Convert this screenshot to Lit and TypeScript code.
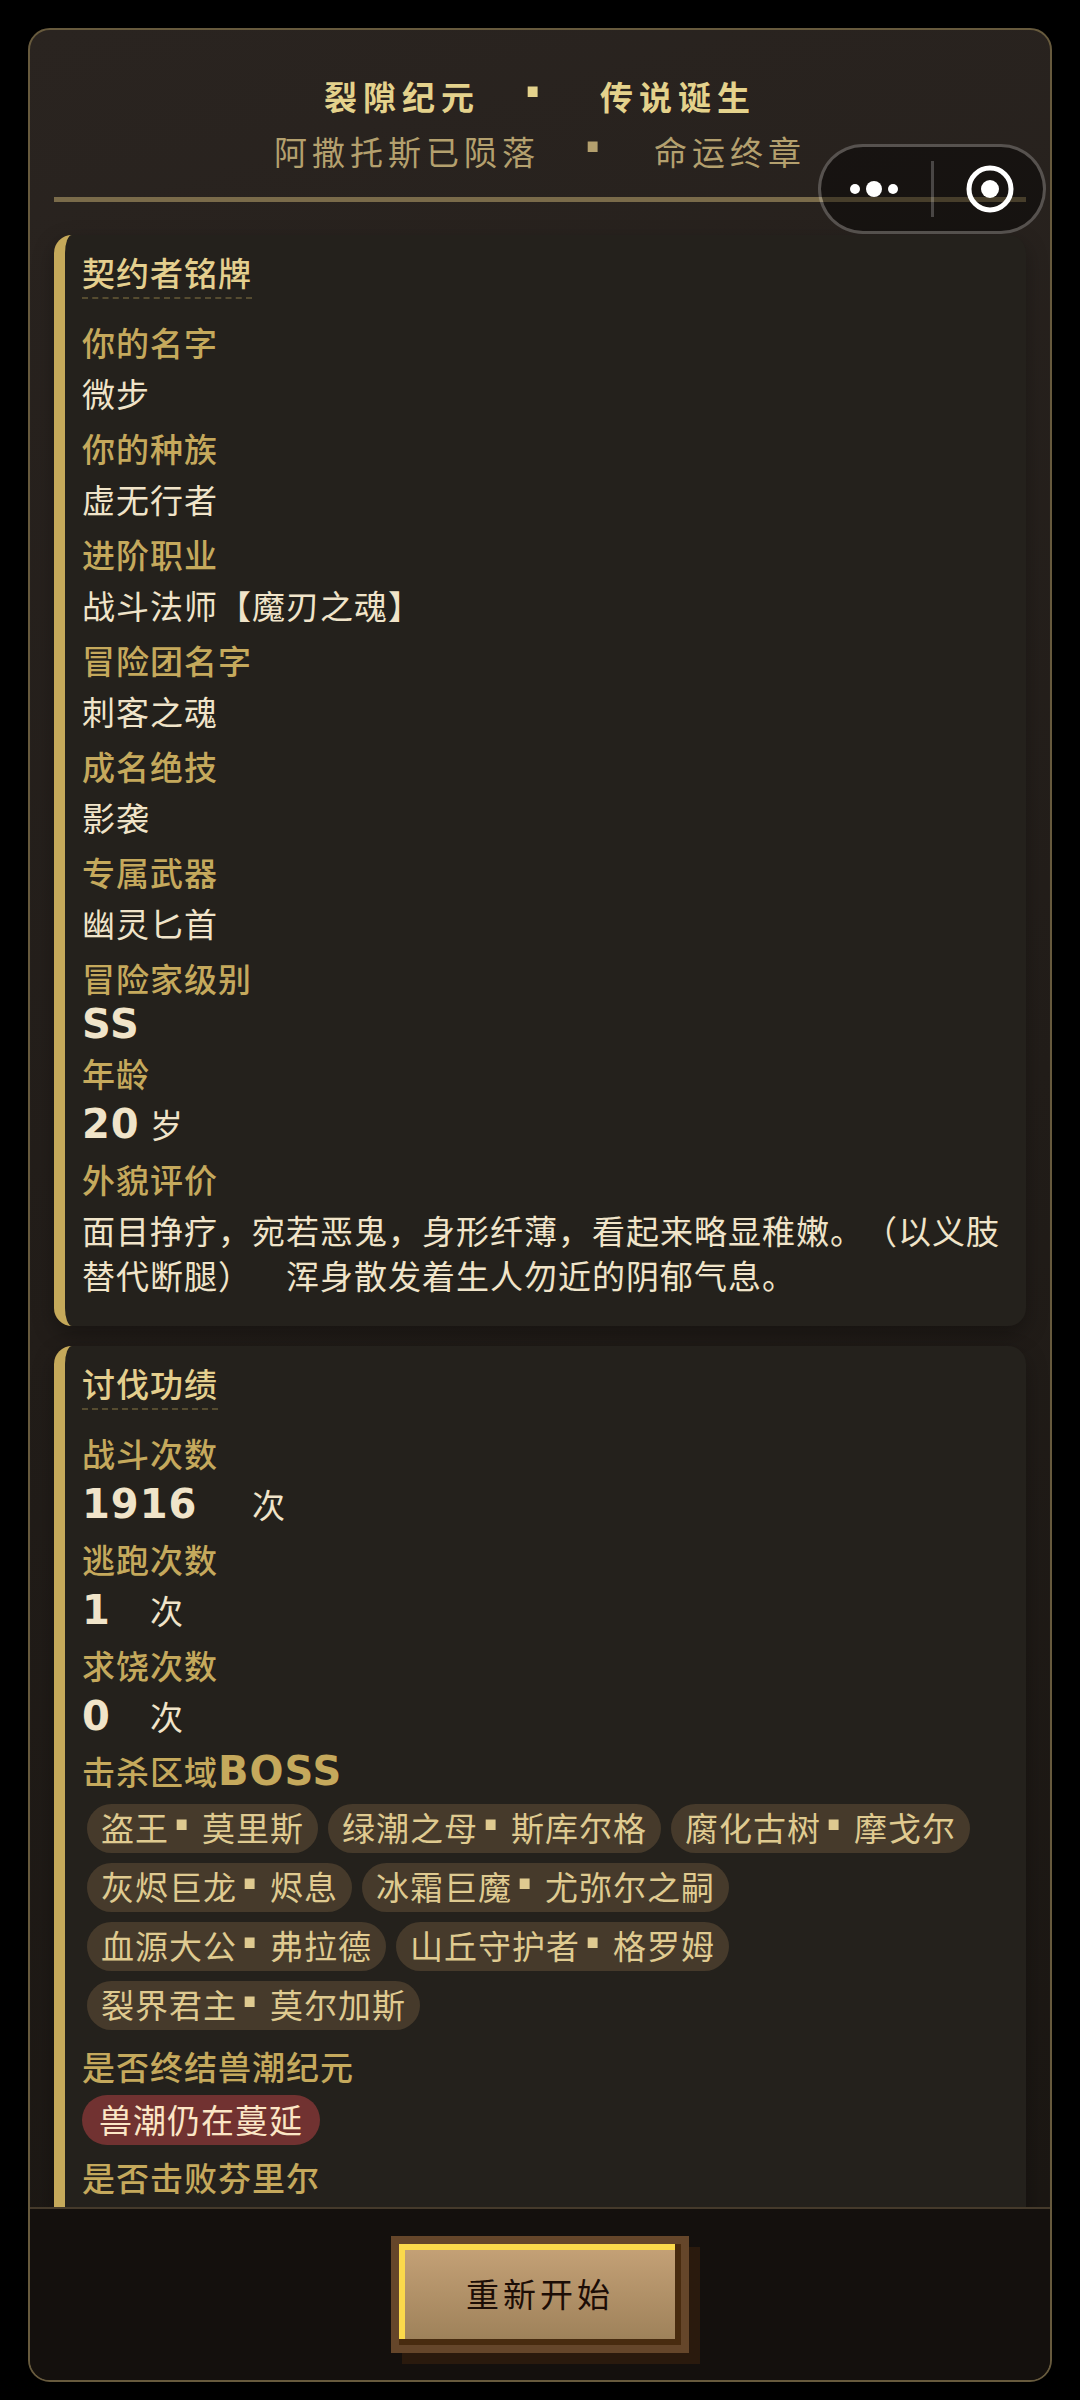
import { LitElement, html, css, nothing, TemplateResult } from "lit";
import { customElement, property } from "lit/decorators.js";

const sans = css`"Noto Sans CJK SC", "Noto Sans", sans-serif`;
const block = css`"DejaVu Sans", "Noto Sans CJK SC", sans-serif`;

interface Entry {
  label: string;
  labelCode?: string;
  text?: string;
  number?: string;
  unit?: string;
  spaced?: boolean;
  tags?: string[][];
  status?: string;
}

const profile: Entry[] = [
  { label: "你的名字", text: "微步" },
  { label: "你的种族", text: "虚无行者" },
  { label: "进阶职业", text: "战斗法师【魔刃之魂】" },
  { label: "冒险团名字", text: "刺客之魂" },
  { label: "成名绝技", text: "影袭" },
  { label: "专属武器", text: "幽灵匕首" },
  { label: "冒险家级别", number: "SS" },
  { label: "年龄", number: "20", unit: "岁" },
  {
    label: "外貌评价",
    text: "面目挣疗，宛若恶鬼，身形纤薄，看起来略显稚嫩。（以义肢替代断腿）\u3000浑身散发着生人勿近的阴郁气息。",
  },
];

const deeds: Entry[] = [
  { label: "战斗次数", number: "1916", unit: "次", spaced: true },
  { label: "逃跑次数", number: "1", unit: "次", spaced: true },
  { label: "求饶次数", number: "0", unit: "次", spaced: true },
  {
    label: "击杀区域",
    labelCode: "BOSS",
    tags: [
      ["盗王", "莫里斯"],
      ["绿潮之母", "斯库尔格"],
      ["腐化古树", "摩戈尔"],
      ["灰烬巨龙", "烬息"],
      ["冰霜巨魔", "尤弥尔之嗣"],
      ["血源大公", "弗拉德"],
      ["山丘守护者", "格罗姆"],
      ["裂界君主", "莫尔加斯"],
    ],
  },
  { label: "是否终结兽潮纪元", status: "兽潮仍在蔓延" },
  { label: "是否击败芬里尔" },
];

@customElement("record-card")
export class RecordCard extends LitElement {
  @property() heading = "";
  @property({ attribute: false }) entries: Entry[] = [];

  static styles = css`
    :host {
      display: block;
      flex: none;
      box-sizing: border-box;
      padding: 15px 17px 18px;
      border-left: 11px solid #c5a95a;
      border-radius: 18px;
      background: #24211c;
      box-shadow: 0 8px 22px rgba(0, 0, 0, 0.3);
      font: 400 33px/45px ${sans};
      letter-spacing: 1px;
      color: #f0e4c9;
    }
    .heading {
      display: inline-block;
      vertical-align: top;
      margin: 0 0 21px;
      padding-bottom: 2px;
      border-bottom: 2px dashed #564c30;
      font-size: 33px;
      font-weight: 500;
      color: #e4cf8e;
    }
    .list {
      margin: 0;
    }
    .entry {
      margin-bottom: 10px;
    }
    .label {
      height: 45px;
      margin-bottom: 6px;
      font-weight: 500;
      color: #c5a95c;
    }
    .value {
      display: flex;
      margin: 0;
      align-items: baseline;
    }
    .prose {
      text-spacing-trim: space-all;
    }
    .number,
    .code {
      font: 700 40px/34px ${block};
    }
    .gap {
      margin-left: 34px;
    }
    .mixed {
      height: 45px;
    }
    .tags {
      display: flex;
      flex-wrap: wrap;
      gap: 10px;
      margin: 0;
      padding: 4px 5px;
      list-style: none;
    }
    .tag {
      display: flex;
      height: 49px;
      padding: 0 14px;
      border-radius: 25px;
      background: #463a2b;
      line-height: 47px;
      color: #dfca90;
    }
    .dot {
      box-sizing: border-box;
      width: 33px;
      padding-left: 2px;
      font: 700 56px/41px ${block};
    }
    .status {
      height: 50px;
      padding: 0 17px;
      border-radius: 25px;
      background: #713231;
      line-height: 48px;
      color: #fbe6c6;
    }
  `;

  private value(e: Entry): TemplateResult | typeof nothing {
    if (e.text) return html`<dd class="value prose">${e.text}</dd>`;
    if (e.number)
      return html`<dd class="value ${e.unit ? "mixed" : ""}">
        <span class="number" style="min-width:${e.number.length * 34}px">${e.number}</span
        >${e.unit ? html`<span class=${e.spaced ? "gap" : ""}>${e.unit}</span>` : nothing}
      </dd>`;
    if (e.tags)
      return html`<dd class="value">
        <ul class="tags">
          ${e.tags.map(
            ([a, b]) => html`<li class="tag"><span>${a}</span><span class="dot">·</span><span>${b}</span></li>`
          )}
        </ul>
      </dd>`;
    if (e.status) return html`<dd class="value"><span class="status">${e.status}</span></dd>`;
    return nothing;
  }

  render() {
    return html`
      <h2 class="heading">${this.heading}</h2>
      <dl class="list">
        ${this.entries.map(
          (e) => html`<div class="entry">
            <dt class="label">${e.label}${e.labelCode ? html`<span class="code">${e.labelCode}</span>` : nothing}</dt>
            ${this.value(e)}
          </div>`
        )}
      </dl>
    `;
  }
}

@customElement("app-root")
export class AppRoot extends LitElement {
  static styles = css`
    :host {
      display: flex;
      flex-direction: column;
      box-sizing: border-box;
      position: relative;
      height: 100vh;
      padding: 28px 28px 18px;
      background: #000;
      font-family: ${sans};
    }
    .panel {
      display: flex;
      flex: 1;
      flex-direction: column;
      min-height: 0;
      overflow: hidden;
      border: 2px solid #675a3d;
      border-radius: 22px;
      background: linear-gradient(165deg, #2a2420, #1a1612);
    }
    .scroll {
      display: flex;
      flex: 1;
      flex-direction: column;
      gap: 20px;
      min-height: 0;
      padding: 24px 24px 0;
      overflow-y: auto;
      scrollbar-width: none;
    }
    .header {
      flex: none;
      margin-bottom: 13px;
      padding: 15px 0 18px;
      border-bottom: 5px solid #7a6b4a;
    }
    .title,
    .subtitle {
      display: flex;
      justify-content: center;
      margin: 0;
      font-size: 33px;
      line-height: 55px;
      white-space: nowrap;
    }
    .title {
      font-weight: 700;
      letter-spacing: 6px;
      color: #e4d28c;
    }
    .subtitle {
      font-weight: 400;
      letter-spacing: 5px;
      color: #b4a06e;
    }
    .dot {
      box-sizing: border-box;
      width: 114px;
      padding-left: 42px;
      font: 700 56px/45px ${block};
    }
    .title .dot {
      width: 120px;
    }
    .footer {
      display: flex;
      flex: none;
      justify-content: center;
      padding: 27px 24px;
      border-top: 2px solid #453a2b;
      background: #14100d;
    }
    .restart {
      min-width: 298px;
      height: 117px;
      padding: 0 60px 3px;
      border: 8px solid #65462a;
      border-radius: 0;
      background: linear-gradient(#c9a57a, #997d56);
      background-origin: border-box;
      box-shadow:
        inset -6px -6px 0 #482b0f,
        inset 6px 6px 0 #fbd94b,
        11px 11px 0 #2a1a0d;
      font: 400 33px/45px ${sans};
      letter-spacing: 4px;
      color: #1c0d06;
    }
    .capsule {
      display: flex;
      position: absolute;
      top: 144px;
      right: 34px;
      box-sizing: border-box;
      width: 228px;
      height: 90px;
      align-items: center;
      border: 3px solid rgba(255, 255, 255, 0.22);
      border-radius: 45px;
      background: rgba(0, 0, 0, 0.42);
      background-clip: padding-box;
    }
    .tool {
      display: flex;
      flex: 1;
      height: 84px;
      align-items: center;
      justify-content: center;
      padding: 0;
      border: 0;
      background: none;
    }
    .more {
      padding-right: 3px;
    }
    .close {
      padding-left: 3px;
    }
    .rule {
      width: 3px;
      height: 56px;
      background: rgba(255, 255, 255, 0.22);
    }
  `;

  render() {
    return html`
      <main class="panel" lang="zh-CN">
        <div class="scroll">
          <header class="header">
            <h1 class="title"><span>裂隙纪元</span><span class="dot">·</span><span>传说诞生</span></h1>
            <p class="subtitle"><span>阿撒托斯已陨落</span><span class="dot">·</span><span>命运终章</span></p>
          </header>
          <record-card heading="契约者铭牌" .entries=${profile}></record-card>
          <record-card heading="讨伐功绩" .entries=${deeds}></record-card>
        </div>
        <footer class="footer">
          <button class="restart" type="button">重新开始</button>
        </footer>
      </main>
      <div class="capsule">
        <button class="tool more" type="button" aria-label="更多">
          <svg width="54" height="54" viewBox="0 0 54 54" fill="#fff" aria-hidden="true">
            <circle cx="8" cy="27" r="5" />
            <circle cx="27" cy="27" r="8" />
            <circle cx="46" cy="27" r="5" />
          </svg>
        </button>
        <span class="rule"></span>
        <button class="tool close" type="button" aria-label="关闭">
          <svg width="54" height="54" viewBox="0 0 54 54" fill="#fff" aria-hidden="true">
            <circle cx="27" cy="27" r="21" fill="none" stroke="#fff" stroke-width="5" />
            <circle cx="27" cy="27" r="9" />
          </svg>
        </button>
      </div>
    `;
  }
}
